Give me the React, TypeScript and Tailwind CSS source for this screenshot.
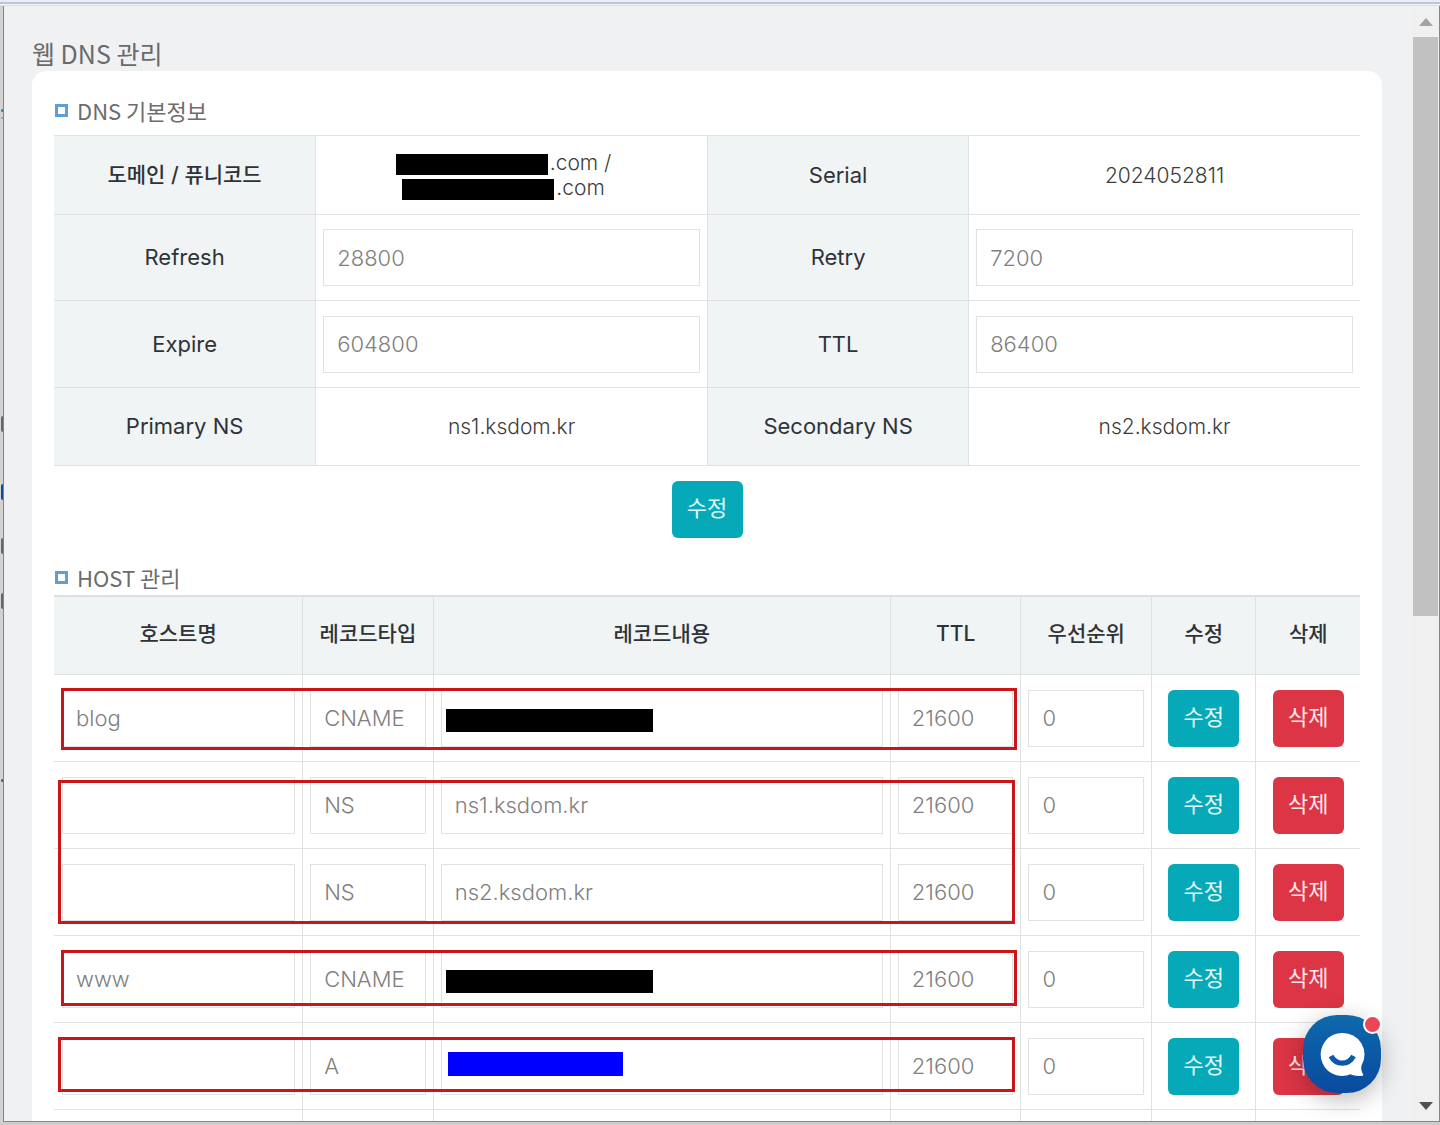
import type { ReactNode } from "react";
import clsx from "clsx";

type Redaction = "black" | "blue";

type HostRecord = {
  id: number;
  host: string;
  type: string;
  content: string;
  ttl: string;
  priority: string;
  redaction?: Redaction;
};

const HOST_COLUMNS = [
  { label: "호스트명", width: "w-[19%]" },
  { label: "레코드타입", width: "w-[10%]" },
  { label: "레코드내용", width: "w-[35%]" },
  { label: "TTL", width: "w-[10%]" },
  { label: "우선순위", width: "w-[10%]" },
  { label: "수정", width: "w-[8%]" },
  { label: "삭제", width: "w-[8%]" },
];

const RECORDS: HostRecord[] = [
  { id: 1, host: "blog", type: "CNAME", content: "", ttl: "21600", priority: "0", redaction: "black" },
  { id: 2, host: "", type: "NS", content: "ns1.ksdom.kr", ttl: "21600", priority: "0" },
  { id: 3, host: "", type: "NS", content: "ns2.ksdom.kr", ttl: "21600", priority: "0" },
  { id: 4, host: "www", type: "CNAME", content: "", ttl: "21600", priority: "0", redaction: "black" },
  { id: 5, host: "", type: "A", content: "", ttl: "21600", priority: "0", redaction: "blue" },
];

// Red boxes drawn over groups of host records
const MARKERS = [
  "left-[7px] right-[343px] top-[93px] h-[62px]",
  "left-[4px] right-[345px] top-[185px] h-[144px]",
  "left-[7px] right-[343px] top-[355px] h-[56px]",
  "left-[4px] right-[345px] top-[442px] h-[55px]",
];

// Bits of the page behind the popup that show at its left edge
const BACKDROP = [
  { top: 109, height: 3, color: "#2f7fae" },
  { top: 117, height: 2, color: "#8fa9b8" },
  { top: 416, height: 16, color: "#666666" },
  { top: 484, height: 16, color: "#114a9c" },
  { top: 538, height: 16, color: "#666666" },
  { top: 593, height: 16, color: "#666666" },
  { top: 779, height: 3, color: "#555555" },
];

function SectionTitle({ children }: { children: string }) {
  return (
    <h2 className="flex items-center gap-[9px] pl-px font-['Noto_Sans_CJK_KR',sans-serif] text-[22px] leading-[30px] text-[#6c6c6c]">
      <span className="size-[13px] border-[3px] border-[#5f9fd8] bg-white" />
      {children}
    </h2>
  );
}

function Field({ label, value }: { label: string; value: string }) {
  return (
    <input
      type="text"
      aria-label={label}
      defaultValue={value}
      className="block h-[57px] w-full border border-[#dfe1e3] bg-white pl-[13px] text-[22px] font-light text-[#808080] outline-none"
    />
  );
}

function ActionButton({ danger, children }: { danger?: boolean; children: string }) {
  return (
    <button
      type="button"
      className={clsx(
        "h-[57px] w-[71px] rounded-md pb-0.5 text-[22px] text-white/90",
        danger ? "bg-[#dc3545]" : "bg-[#06a9b8]"
      )}
    >
      {children}
    </button>
  );
}

function InfoHead({ children, first, korean }: { children: string; first?: boolean; korean?: boolean }) {
  return (
    <th
      scope="row"
      className={clsx(
        "border-b border-[#dee2e4] bg-[#f0f4f5] text-center text-[#2f3337]",
        korean ? "text-[21px] font-medium" : "text-[22px] font-normal",
        !first && "border-l"
      )}
    >
      {children}
    </th>
  );
}

function InfoCell({ children }: { children: ReactNode }) {
  return (
    <td className="border-b border-l border-[#dee2e4] px-[7px] text-center text-[21px] font-light leading-[25px] text-[#3c3c3c]">
      {children}
    </td>
  );
}

function InfoTable() {
  return (
    <table className="w-full table-fixed border-separate border-spacing-0 border-t border-[#dee2e4]">
      <colgroup>
        <col className="w-[20%]" />
        <col className="w-[30%]" />
        <col className="w-[20%]" />
        <col className="w-[30%]" />
      </colgroup>
      <tbody>
        <tr className="h-[79px]">
          <InfoHead first korean>
            도메인 / 퓨니코드
          </InfoHead>
          <InfoCell>
            <div className="flex flex-col items-center pr-4">
              <span className="flex items-end gap-[2px]">
                <span className="h-[21px] w-[152px] bg-black" />
                .com /
              </span>
              <span className="flex items-end gap-[2px]">
                <span className="h-[21px] w-[152px] bg-black" />
                .com
              </span>
            </div>
          </InfoCell>
          <InfoHead>Serial</InfoHead>
          <InfoCell>2024052811</InfoCell>
        </tr>
        <tr className="h-[86px]">
          <InfoHead first>Refresh</InfoHead>
          <InfoCell>
            <Field label="Refresh" value="28800" />
          </InfoCell>
          <InfoHead>Retry</InfoHead>
          <InfoCell>
            <Field label="Retry" value="7200" />
          </InfoCell>
        </tr>
        <tr className="h-[87px]">
          <InfoHead first>Expire</InfoHead>
          <InfoCell>
            <Field label="Expire" value="604800" />
          </InfoCell>
          <InfoHead>TTL</InfoHead>
          <InfoCell>
            <Field label="TTL" value="86400" />
          </InfoCell>
        </tr>
        <tr className="h-[78px]">
          <InfoHead first>Primary NS</InfoHead>
          <InfoCell>ns1.ksdom.kr</InfoCell>
          <InfoHead>Secondary NS</InfoHead>
          <InfoCell>ns2.ksdom.kr</InfoCell>
        </tr>
      </tbody>
    </table>
  );
}

const HOST_CELL = "border-b border-l border-[#dee2e4] px-[7px] text-center first:border-l-0 first:pl-2";

function HostTable() {
  return (
    <div className="relative">
      <table className="w-full table-fixed border-separate border-spacing-0 border-t-2 border-[#dcdfe1]">
        <thead>
          <tr className="h-[78px]">
            {HOST_COLUMNS.map((col) => (
              <th
                key={col.label}
                scope="col"
                className={clsx(
                  "border-b border-l border-[#dee2e4] bg-[#f0f4f5] pb-1 text-center text-[21px] font-medium text-[#2f3337] first:border-l-0",
                  col.width
                )}
              >
                {col.label}
              </th>
            ))}
          </tr>
        </thead>
        <tbody>
          {RECORDS.map((record) => (
            <tr key={record.id} className="h-[87px]">
              <td className={HOST_CELL}>
                <Field label="호스트명" value={record.host} />
              </td>
              <td className={HOST_CELL}>
                <Field label="레코드타입" value={record.type} />
              </td>
              <td className={HOST_CELL}>
                <div className="relative">
                  <Field label="레코드내용" value={record.content} />
                  {record.redaction === "black" && (
                    <span className="absolute left-[5px] top-[19px] h-[23px] w-[207px] bg-black" />
                  )}
                  {record.redaction === "blue" && (
                    <span className="absolute left-[7px] top-[14px] h-[24px] w-[175px] bg-[#0000ff]" />
                  )}
                </div>
              </td>
              <td className={HOST_CELL}>
                <Field label="TTL" value={record.ttl} />
              </td>
              <td className={HOST_CELL}>
                <Field label="우선순위" value={record.priority} />
              </td>
              <td className={HOST_CELL}>
                <ActionButton>수정</ActionButton>
              </td>
              <td className={HOST_CELL}>
                <ActionButton danger>삭제</ActionButton>
              </td>
            </tr>
          ))}
          <tr className="h-[87px]">
            {HOST_COLUMNS.map((col) => (
              <td key={col.label} className={HOST_CELL} />
            ))}
          </tr>
        </tbody>
      </table>
      {MARKERS.map((marker) => (
        <div key={marker} className={clsx("pointer-events-none absolute border-[3px] border-[#cb1518]", marker)} />
      ))}
    </div>
  );
}

function ChatButton() {
  return (
    <button
      type="button"
      aria-label="채팅 상담"
      className="absolute bottom-[28px] right-[31px] size-[78px] rounded-[34px] bg-linear-to-b from-[#0f69ab] to-[#0a4a9f] shadow-[0_6px_24px_rgba(0,0,0,0.28)]"
    >
      <svg viewBox="0 0 78 78" className="size-full" aria-hidden="true">
        <path
          d="M39 18a21.500 21.500 0 1 0 8.500 41.300c3.500 1.700 8 1.800 12 1.400.7-.1 1-.8.6-1.400-1.800-2.700-2.200-5.600-1.600-8.800A21.500 21.500 0 0 0 39 18z"
          fill="#fff"
        />
        <path d="M28 41c5 9.500 17.500 9.500 22.500 0" fill="none" stroke="#0d59a6" strokeWidth="5.200" />
      </svg>
      <span className="absolute -right-[1px] top-0 size-[19px] rounded-full border-[2px] border-white bg-[#ea4656]" />
    </button>
  );
}

function Scrollbar() {
  return (
    <div className="flex w-[27px] shrink-0 flex-col bg-[#f0f0f1]">
      <div className="flex h-[31px] items-center justify-center">
        <svg width="14" height="8" viewBox="0 0 14 8" aria-hidden="true">
          <path d="M7 0l7 8H0z" fill="#a3a3a3" />
        </svg>
      </div>
      <div className="flex-1 pl-px pr-px">
        <div className="h-[55%] bg-[#c1c1c1]" />
      </div>
      <div className="flex h-[31px] items-center justify-center">
        <svg width="14" height="8" viewBox="0 0 14 8" aria-hidden="true">
          <path d="M7 8L0 0h14z" fill="#505050" />
        </svg>
      </div>
    </div>
  );
}

export default function App() {
  return (
    <div className="relative flex h-screen flex-col overflow-hidden bg-[#d2d2d2] font-[Inter,'Noto_Sans_CJK_KR',sans-serif]">
      <div className="h-[6px] shrink-0 border-b border-[#dcdddd] bg-[#f4f5f8]">
        <div className="h-[4px] border-b-2 border-[#bfc4d0] bg-[#e9edf9]" />
      </div>

      <div className="flex min-h-0 flex-1 pl-[3px]">
        <div className="relative flex min-w-0 flex-1 border-x border-b border-[#858585] bg-[#f0f1f3]">
          <main className="flex min-w-0 flex-1 flex-col overflow-hidden pl-7 pr-[30px] pt-[30px]">
            <h1 className="font-['Noto_Sans_CJK_KR',sans-serif] text-[25px] leading-[35px] text-[#6a6a6a]">
              웹 DNS 관리
            </h1>
            <div className="rounded-t-[14px] bg-white px-[22px] pt-6">
              <SectionTitle>DNS 기본정보</SectionTitle>
              <div className="mt-[10px]">
                <InfoTable />
              </div>
              <div className="mt-[15px] flex justify-center">
                <ActionButton>수정</ActionButton>
              </div>
              <div className="mt-6">
                <SectionTitle>HOST 관리</SectionTitle>
                <div className="mt-[3px]">
                  <HostTable />
                </div>
              </div>
            </div>
          </main>
          <Scrollbar />
          <div className="pointer-events-none absolute inset-y-0 left-0 right-[27px]">
            <div className="pointer-events-auto">
              <ChatButton />
            </div>
          </div>
        </div>
      </div>
      <div className="h-[3px] shrink-0 bg-[#cdcdcd]" />

      {BACKDROP.map((mark) => (
        <span
          key={mark.top}
          className="absolute left-px w-[2px] rounded-l-[2px]"
          style={{ top: mark.top, height: mark.height, backgroundColor: mark.color }}
        />
      ))}
    </div>
  );
}
